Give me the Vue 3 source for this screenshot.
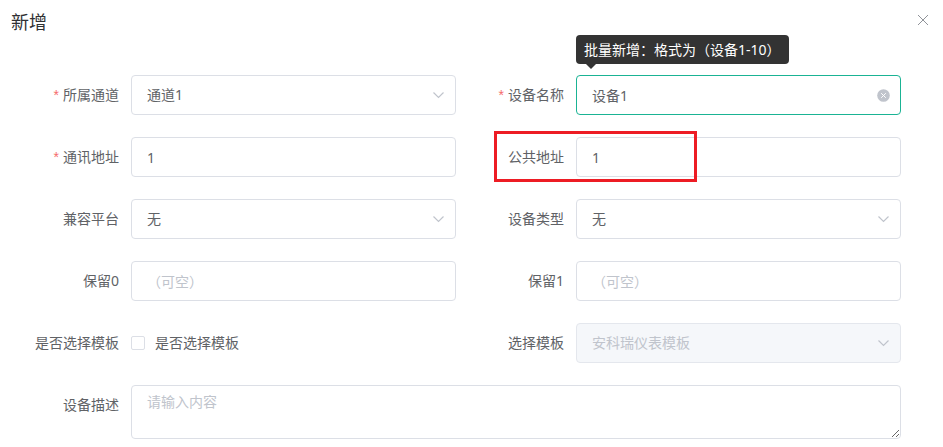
<script setup>
import { reactive } from "vue";

const form = reactive({
  channel: "通道1",
  name: "设备1",
  address: "1",
  publicAddress: "1",
  platform: "无",
  type: "无",
  reserve0: "",
  reserve1: "",
  useTemplate: false,
  template: "安科瑞仪表模板",
  description: "",
});

const fields = [
  { key: "channel", label: "所属通道", kind: "select", required: true },
  { key: "name", label: "设备名称", kind: "input", required: true, tip: "批量新增：格式为（设备1-10）" },
  { key: "address", label: "通讯地址", kind: "input", required: true },
  { key: "publicAddress", label: "公共地址", kind: "input", marked: true },
  { key: "platform", label: "兼容平台", kind: "select" },
  { key: "type", label: "设备类型", kind: "select" },
  { key: "reserve0", label: "保留0", kind: "input", placeholder: "（可空）" },
  { key: "reserve1", label: "保留1", kind: "input", placeholder: "（可空）" },
  { key: "useTemplate", label: "是否选择模板", kind: "checkbox" },
  { key: "template", label: "选择模板", kind: "select", needsTemplate: true },
];

defineEmits(["close"]);
</script>

<template>
  <div class="dialog">
    <header class="dialog-header">
      <h1>新增</h1>
      <button type="button" class="close" aria-label="关闭" @click="$emit('close')">
        <svg width="12" height="12" viewBox="0 0 12 12">
          <path d="M1 1L11 11M11 1L1 11" />
        </svg>
      </button>
    </header>
    <form class="form" @submit.prevent>
      <div v-for="field in fields" :key="field.key" class="form-item">
        <label class="label" :class="{ required: field.required }" :for="field.key">{{ field.label }}</label>
        <div class="content">
          <template v-if="field.kind === 'select'">
            <select :id="field.key" v-model="form[field.key]" class="control" :disabled="field.needsTemplate && !form.useTemplate">
              <option>{{ form[field.key] }}</option>
            </select>
            <svg class="suffix arrow" width="14" height="14" viewBox="0 0 14 14">
              <path d="M1.5 4.5L6.5 9.5L11.5 4.5" />
            </svg>
          </template>
          <div v-else-if="field.kind === 'checkbox'" class="check">
            <input :id="field.key" v-model="form[field.key]" type="checkbox" />
            <label :for="field.key">{{ field.label }}</label>
          </div>
          <input
            v-else
            :id="field.key"
            v-model="form[field.key]"
            type="text"
            class="control"
            :class="{ active: field.tip }"
            :placeholder="field.placeholder"
          />
          <template v-if="field.tip">
            <button type="button" class="suffix clear" aria-label="清空" @click="form[field.key] = ''">
              <svg width="14" height="14" viewBox="0 0 14 14">
                <circle cx="6.5" cy="7.5" r="6.3" />
                <path d="M4.2 5.2L8.8 9.8M8.8 5.2L4.2 9.8" />
              </svg>
            </button>
            <div class="tooltip" role="tooltip">{{ field.tip }}</div>
          </template>
        </div>
        <div v-if="field.marked" class="mark"></div>
      </div>
      <div class="form-item wide">
        <label class="label" for="description">设备描述</label>
        <div class="content">
          <textarea id="description" v-model="form.description" class="control" rows="2" placeholder="请输入内容"></textarea>
        </div>
      </div>
    </form>
  </div>
</template>

<style>
body {
  margin: 0;
  background: #fff;
}
</style>

<style scoped>
.dialog {
  color: #606266;
  font-family: "Noto Sans", "Noto Sans CJK SC", sans-serif;
  font-size: 14px;
}

.dialog-header {
  display: flex;
  justify-content: space-between;
  align-items: flex-start;
  padding: 10px 14px 0 11px;
}

.dialog-header h1 {
  margin: 0;
  color: #303133;
  font-size: 18px;
  font-weight: normal;
  line-height: 24px;
}

button {
  display: block;
  padding: 0;
  border: none;
  background: none;
  cursor: pointer;
}

button svg {
  display: block;
}

.close {
  padding-top: 4px;
}

.close path {
  fill: none;
  stroke: #909399;
}

.form {
  display: grid;
  grid-template-columns: 1fr 1fr;
  row-gap: 22px;
  padding: 41px 42px 8px 11px;
}

.form-item {
  position: relative;
  display: flex;
}

.wide {
  grid-column: 1 / -1;
}

.label {
  box-sizing: border-box;
  flex: 0 0 120px;
  padding-right: 12px;
  line-height: 40px;
  text-align: right;
}

.required::before {
  content: "*";
  margin-right: 4px;
  color: #f56c6c;
  font-family: "Liberation Sans", sans-serif;
}

.content {
  position: relative;
  flex: 1;
  min-width: 0;
}

.control {
  display: block;
  box-sizing: border-box;
  width: 100%;
  height: 40px;
  margin: 0;
  padding: 0 15px;
  border: 1px solid #dcdfe6;
  border-radius: 4px;
  outline: none;
  appearance: none;
  background: #fff;
  color: #606266;
  font-family: inherit;
  font-size: 14px;
  line-height: 38px;
}

select.control,
.control.active {
  padding-right: 30px;
}

.control:focus,
.control.active {
  border-color: #1ab394;
}

.control::placeholder {
  color: #c0c4cc;
}

.control:disabled {
  border-color: #e4e7ed;
  background: #f5f7fa;
  color: #c0c4cc;
  opacity: 1;
}

textarea.control {
  height: auto;
  padding: 5px 15px;
  line-height: 21px;
  resize: vertical;
}

.suffix {
  position: absolute;
  top: 13px;
  right: 10px;
}

.arrow {
  pointer-events: none;
}

.arrow path {
  fill: none;
  stroke: #c0c4cc;
  stroke-width: 1.2;
}

.clear circle {
  fill: #c0c4cc;
}

.clear path {
  stroke: #fff;
}

.check {
  display: flex;
  align-items: center;
  gap: 10px;
  line-height: 40px;
}

.check input {
  box-sizing: border-box;
  width: 14px;
  height: 14px;
  margin: 0;
  border: 1px solid #dcdfe6;
  border-radius: 2px;
  appearance: none;
  background: #fff;
}

.check input:checked {
  border-color: #1ab394;
  background: #1ab394;
}

.tooltip {
  position: absolute;
  bottom: 100%;
  left: 0;
  margin-bottom: 11px;
  padding: 0 8px;
  border-radius: 4px;
  background: #333;
  color: #fff;
  line-height: 29px;
  white-space: nowrap;
}

.tooltip::after {
  content: "";
  position: absolute;
  top: 100%;
  left: 10px;
  border: 5px solid transparent;
  border-top-color: #333;
  border-bottom: none;
}

/* highlight frame round the label and the start of its input */
.mark {
  position: absolute;
  top: -6px;
  bottom: -5px;
  left: 38px;
  right: 204px;
  border: 3px solid #ed1c24;
  pointer-events: none;
}
</style>
